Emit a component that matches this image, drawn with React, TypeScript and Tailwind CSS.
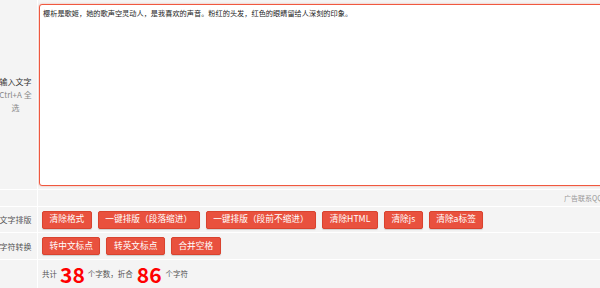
import React from 'react';

const font = { fontFamily: '"Microsoft YaHei","Noto Sans CJK SC",sans-serif' };

const Btn = ({ children }: { children: React.ReactNode }) => (
  <button className="h-[18px] px-[6.5px] rounded-[2px] border border-[#d9432f] bg-[#e9513e] text-white text-[8.7px] leading-none whitespace-nowrap shadow-[0_1px_1px_rgba(0,0,0,0.15)]">
    {children}
  </button>
);

const Label = ({ children }: { children: React.ReactNode }) => (
  <div className="w-[38px] shrink-0 flex items-center justify-center pr-[6px] border-r border-white">
    <div className="w-[36px] shrink-0 text-center text-[8px] leading-[13px] text-[#555]">{children}</div>
  </div>
);

const App = () => {
  const text =
    '樱析是歌姬，她的歌声空灵动人，是我喜欢的声音。粉红的头发，红色的眼睛留给人深刻的印象。';

  return (
    <div className="w-[600px] h-[288px] overflow-hidden bg-[#f4f4f4]" style={font}>
      <div className="w-[640px]">
        {/* input row */}
        <div className="flex h-[190px] border-b border-white">
          <Label>
            <div className="text-[#333]">输入文字</div>
            <div className="text-[#888]">Ctrl+A 全选</div>
          </Label>
          <div className="flex-1 pl-[1px] pt-[4px] pb-[3px]">
            <textarea
              defaultValue={text}
              className="w-full h-full resize-none outline-none bg-white border-[1.5px] border-[#f0583f] rounded-[3px] px-[3px] py-[3px] text-[7.2px] leading-[10px] text-[#222] shadow-[0_0_2px_rgba(240,88,63,0.5)]"
              style={font}
            />
          </div>
        </div>

        {/* ad row */}
        <div className="flex h-[17px] border-b border-white">
          <div className="w-[38px] shrink-0 border-r border-white" />
          <div className="flex-1 flex items-center justify-end pr-[4px] text-[7px] text-[#999]">
            <span className="w-[72px] whitespace-nowrap">广告联系QQ：</span>
          </div>
        </div>

        {/* layout row */}
        <div className="flex h-[26px] border-b border-white">
          <Label>文字排版</Label>
          <div className="flex-1 flex items-center gap-[6px] pl-[4px]">
            <Btn>清除格式</Btn>
            <Btn>一键排版（段落缩进）</Btn>
            <Btn>一键排版（段前不缩进）</Btn>
            <Btn>清除HTML</Btn>
            <Btn>清除js</Btn>
            <Btn>清除a标签</Btn>
          </div>
        </div>

        {/* convert row */}
        <div className="flex h-[27px] border-b border-white">
          <Label>字符转换</Label>
          <div className="flex-1 flex items-center gap-[6px] pl-[4px]">
            <Btn>转中文标点</Btn>
            <Btn>转英文标点</Btn>
            <Btn>合并空格</Btn>
          </div>
        </div>

        {/* count row */}
        <div className="flex h-[28px]">
          <div className="w-[38px] shrink-0 border-r border-white" />
          <div className="flex-1 flex items-center pl-[4px] text-[7.5px] text-[#555]">
            <span>共计</span>
            <span className="mx-[3px] text-[21px] font-bold text-[#ff0000] leading-none">38</span>
            <span>个字数，折合</span>
            <span className="mx-[4px] text-[21px] font-bold text-[#ff0000] leading-none">86</span>
            <span>个字符</span>
          </div>
        </div>
      </div>
    </div>
  );
};

export default App;
